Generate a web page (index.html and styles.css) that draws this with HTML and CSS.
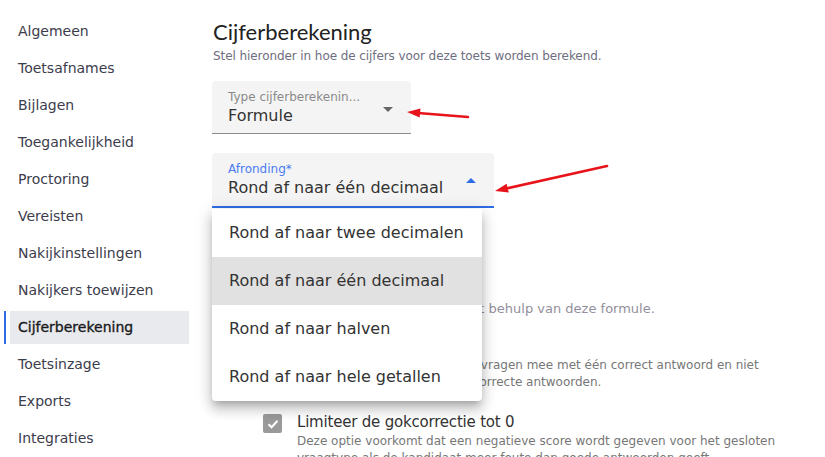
FILE: index.html
```html
<!DOCTYPE html>
<html lang="nl">
<head>
    <meta charset="UTF-8">
    <meta name="viewport" content="width=device-width, initial-scale=1.0">
    <title>Cijferberekening</title>
    <link rel="stylesheet" href="styles.css">
</head>
<body>
    <div class="page">
        <nav class="sidebar">
            <a class="nav-item">Algemeen</a>
            <a class="nav-item">Toetsafnames</a>
            <a class="nav-item">Bijlagen</a>
            <a class="nav-item">Toegankelijkheid</a>
            <a class="nav-item">Proctoring</a>
            <a class="nav-item">Vereisten</a>
            <a class="nav-item">Nakijkinstellingen</a>
            <a class="nav-item">Nakijkers toewijzen</a>
            <a class="nav-item active">Cijferberekening</a>
            <a class="nav-item">Toetsinzage</a>
            <a class="nav-item">Exports</a>
            <a class="nav-item">Integraties</a>
        </nav>

        <main class="content">
            <h1 class="title">Cijferberekening</h1>
            <p class="intro">Stel hieronder in hoe de cijfers voor deze toets worden berekend.</p>

            <div class="field field-type">
                <span class="field-label">Type cijferberekenin...</span>
                <span class="field-value">Formule</span>
                <span class="caret caret-down"></span>
            </div>

            <div class="field field-round focused">
                <span class="field-label">Afronding*</span>
                <span class="field-value">Rond af naar één decimaal</span>
                <span class="caret caret-up"></span>

                <ul class="menu">
                    <li>Rond af naar twee decimalen</li>
                    <li class="selected">Rond af naar één decimaal</li>
                    <li>Rond af naar halven</li>
                    <li>Rond af naar hele getallen</li>
                </ul>
            </div>

            <p class="formula-help">Het eindcijfer wordt berekend met behulp van deze formule.</p>

            <div class="check-row">
                <span class="checkbox"></span>
                <div>
                    <div class="check-label">Gokcorrectie toepassen</div>
                    <p class="check-help">Neem nu alleen de meerkeuzevragen mee met één correct antwoord en niet<br>de vragen met twee of meer correcte antwoorden.</p>
                </div>
            </div>

            <div class="check-row">
                <span class="checkbox checked">
                    <svg width="14" height="14" viewBox="0 0 14 14"><path d="M2.5 7.2 L5.6 10.2 L11.5 3.8" fill="none" stroke="#fff" stroke-width="2"/></svg>
                </span>
                <div>
                    <div class="check-label">Limiteer de gokcorrectie tot 0</div>
                    <p class="check-help">Deze optie voorkomt dat een negatieve score wordt gegeven voor het gesloten<br>vraagtype als de kandidaat meer foute dan goede antwoorden geeft.</p>
                </div>
            </div>
        </main>

        <!-- annotation arrows drawn over the screenshot -->
        <svg class="annotations" width="825" height="457" viewBox="0 0 825 457">
            <line x1="468" y1="117" x2="418" y2="113" stroke="#e8141c" stroke-width="2.6" stroke-linecap="round"/>
            <polygon points="407,112 420.5,108.6 419.7,117.6" fill="#e8141c"/>
            <line x1="607" y1="166" x2="506" y2="188.5" stroke="#e8141c" stroke-width="2.6" stroke-linecap="round"/>
            <polygon points="495,191 506.6,183.8 508.8,192.6" fill="#e8141c"/>
        </svg>
    </div>
</body>
</html>
```

FILE: styles.css
```css
body{
    margin: 0;
    background-color: white;
    font-family: "DejaVu Sans", "Noto Sans", sans-serif;
    color: #3a3a44;
}
.page{
    position: relative;
    display: flex;
    width: 825px;
    height: 457px;
    overflow: hidden;
}
.sidebar{
    width: 189px;
    padding: 15px 0 0 0;
    display: flex;
    flex-direction: column;
    gap: 4px;
    flex-shrink: 0;
}
.nav-item{
    display: block;
    height: 33px;
    line-height: 33px;
    margin-left: 10px;
    padding-left: 8px;
    font-size: 14px;
    color: #3c3c4c;
    position: relative;
}
.nav-item.active{
    background-color: #e8eaed;
    color: #1a1a20;
    -webkit-text-stroke: 0.35px #1a1a20;
}
.nav-item.active::before{
    content: "";
    position: absolute;
    left: -6px;
    top: 0;
    width: 2px;
    height: 33px;
    background-color: #2f6ce5;
}
.content{
    flex: 1;
    padding-left: 24px;
}
.title{
    font-family: Lato, sans-serif;
    font-weight: 400;
    font-size: 22px;
    line-height: 28px;
    margin: 18px 0 0 0;
    color: #222;
}
.intro{
    margin: 2px 0 0 0;
    font-size: 12px;
    line-height: 16px;
    letter-spacing: -0.08px;
    color: #6e6e80;
}
.field{
    position: relative;
    background-color: #f4f4f4;
    border-radius: 4px 4px 0 0;
    border-bottom: 1px solid #8a8a8a;
    height: 53px;
    margin-left: -1px;
    padding-left: 16px;
    box-sizing: border-box;
}
.field-type{
    width: 199px;
    margin-top: 17px;
}
.field-round{
    width: 282px;
    margin-top: 19px;
    height: 55px;
}
.field.focused{
    border-bottom: 2px solid #2f6ce5;
}
.field-label{
    display: block;
    padding-top: 8px;
    font-size: 12px;
    line-height: 16px;
    color: #8a8a8a;
}
.focused .field-label{
    color: #4a7cf0;
}
.field-value{
    display: block;
    margin-top: 1px;
    font-size: 16px;
    line-height: 20px;
    color: #333;
}
.caret{
    position: absolute;
    right: 18px;
    width: 0;
    height: 0;
    border-left: 5px solid transparent;
    border-right: 5px solid transparent;
}
.caret-down{
    top: 26px;
    border-top: 5px solid #666;
}
.caret-up{
    top: 25px;
    border-bottom: 5px solid #2f6ce5;
}
.menu{
    position: absolute;
    left: 0;
    top: 56px;
    width: 270px;
    margin: 0;
    padding: 0;
    list-style: none;
    background-color: white;
    border-radius: 0 0 4px 4px;
    box-shadow: 0 5px 6px -3px rgba(0,0,0,0.2), 0 9px 12px 1px rgba(0,0,0,0.14), 0 3px 16px 2px rgba(0,0,0,0.12);
    z-index: 2;
}
.menu li{
    height: 48px;
    line-height: 48px;
    padding-left: 17px;
    font-size: 16px;
    color: #333;
}
.menu li.selected{
    background-color: #e1e1e1;
}
.formula-help{
    margin: 92px 0 0 48px;
    font-size: 13px;
    line-height: 17px;
    color: #938f9c;
    white-space: nowrap;
}
.check-row{
    display: flex;
    gap: 15px;
    margin-left: 50px;
    margin-top: 19px;
}
.check-row + .check-row{
    margin-top: 21px;
}
.checkbox{
    width: 19px;
    height: 19px;
    border-radius: 2px;
    border: 2px solid #8a8a8a;
    box-sizing: border-box;
    flex-shrink: 0;
    margin-top: 2px;
    display: flex;
    align-items: center;
    justify-content: center;
}
.checkbox.checked{
    background-color: #9a9a9a;
    border-color: #9a9a9a;
}
.check-label{
    font-size: 15px;
    line-height: 20px;
    letter-spacing: -0.2px;
    color: #333;
}
.check-help{
    margin: 1px 0 0 0;
    font-size: 12px;
    line-height: 17px;
    color: #777;
    white-space: nowrap;
}
.annotations{
    position: absolute;
    left: 0;
    top: 0;
    pointer-events: none;
    z-index: 5;
}
```
